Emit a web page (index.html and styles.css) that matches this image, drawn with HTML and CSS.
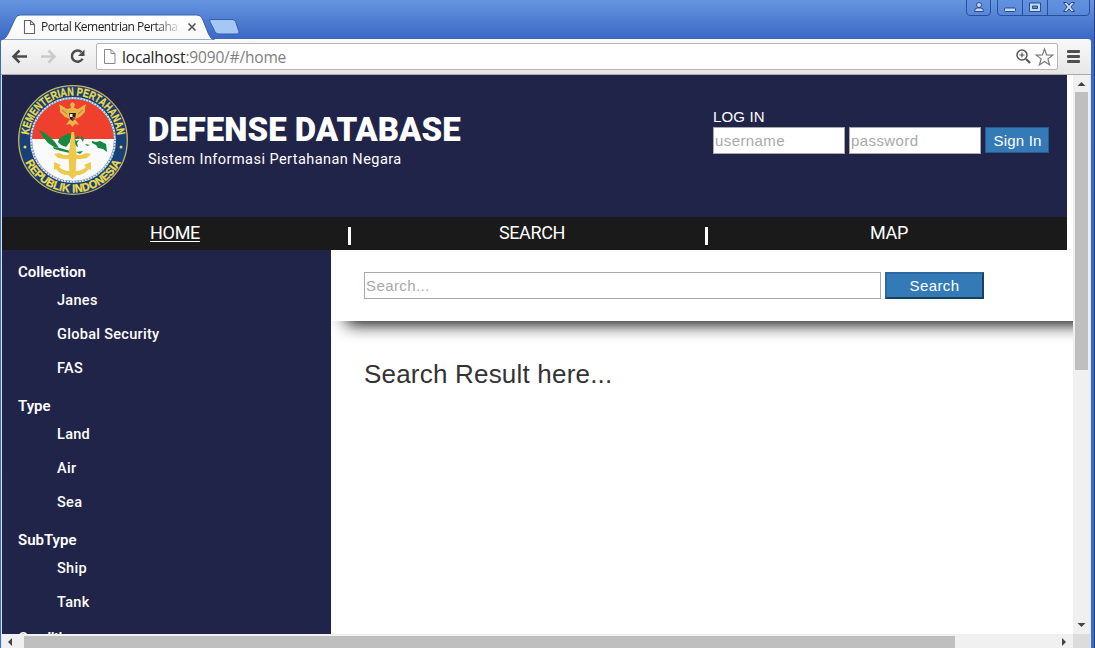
FILE: index.html
```html
<!DOCTYPE html>
<html lang="id">
<head>
<meta charset="utf-8">
<title>Portal Kementrian Pertahanan</title>
<link rel="stylesheet" href="styles.css">
</head>
<body>
<div class="window">
  <div class="titlebar">
    <svg class="tabs" width="260" height="40" viewBox="0 0 260 40">
      <defs><linearGradient id="tab" x1="0" y1="0" x2="0" y2="1"><stop offset="0" stop-color="#fff"/><stop offset="1" stop-color="#f8f8f8"/></linearGradient></defs>
      <path d="M211 19.500h21q2.500 0 3.500 2l3.400 10q.8 2.500-2 2.500h-18q-3 0-4-2.500l-5-10q-.8-2 1.100-2z" fill="#a5c7f4" stroke="#3560b0"/>
      <path d="M1 40q5-1 7-6l7-15q1.500-4 5-4h177q4 0 5.500 4l6 15q2 5 6 6z" fill="url(#tab)" stroke="#3a62ae"/>
      <path d="M24.500 20.500h6l4 4v9h-10zM30.500 20.500v4h4" fill="#fff" stroke="#666" stroke-width="1.100"/>
      <path d="M188.500 23.500l7 7m0-7l-7 7" stroke="#555" stroke-width="1.700"/>
    </svg>
    <span class="tab-title">Portal Kementrian Pertaha</span>
    <svg class="controls" width="125" height="17" viewBox="0 0 125 17">
      <g fill="#5f8fe0" fill-opacity=".35" stroke="#274f9d"><path d="M1.500-2v14q0 3.500 3.500 3.500h17q3.500 0 3.500-3.500V-2z"/><path d="M32.500-2v14q0 3.500 3.500 3.500h85q3.500 0 3.500-3.500V-2zM57.500-1v16M82.500-1v16"/></g>
      <g fill="#c3daf8" stroke="#233e78" stroke-width=".9"><circle cx="14" cy="5" r="2.500"/><path d="M9.500 11.500q0-3.500 3-3.500h3q3 0 3 3.500z"/><rect x="39.500" y="8" width="11" height="3.500" rx="1"/><path fill-rule="evenodd" d="M64.500 3h11v8.500h-11zM67.500 6v2.500h5V6z"/><path d="M98.500 2.500h3.300l2.200 2.700 2.200-2.700h3.300l-3.600 4.500 3.600 4.500h-3.300L104 8.800l-2.200 2.700h-3.300l3.600-4.500z"/></g>
    </svg>
  </div>
  <div class="toolbar">
    <svg class="nav-icons" width="92" height="35" viewBox="0 0 92 35" fill="none" stroke-width="2.500">
      <path d="M27 17.500H13.500M19.500 11.500l-6 6 6 6" stroke="#4c4c4c"/>
      <path d="M41 17.500h13.500M48.500 11.500l6 6-6 6" stroke="#cacaca"/>
      <path d="M81.500 13.200a5.600 5.600 0 1 0 1 6.500" stroke="#4c4c4c"/><path d="M84.500 10.500v6.500H78z" fill="#4c4c4c"/>
    </svg>
    <div class="address">
      <svg width="14" height="17" viewBox="0 0 14 17"><path d="M1.500 1.500h6.500l4 4v10H1.500zM8 1.500v4h4" fill="#fff" stroke="#888"/></svg>
      <span class="url"><b>localhost</b>:9090/#/home</span>
      <svg class="page-actions" width="40" height="20" viewBox="0 0 40 20" fill="none" stroke="#555">
        <circle cx="7" cy="8" r="5" stroke-width="1.500"/><path d="M4.500 8h5M7 5.500v5" stroke-width="1.200"/><path d="M11 12l4 4" stroke-width="2.200"/>
        <path d="M29.500 2l2.100 5.900 6.200.2-4.900 3.800 1.700 6-5.100-3.500-5.100 3.500 1.700-6-4.900-3.800 6.200-.2z" stroke="#777" stroke-width="1.200" fill="#fff"/>
      </svg>
    </div>
    <div class="menu"><i></i><i></i><i></i></div>
  </div>
  <div class="viewport">
    <main class="page">
      <header class="header">
        <svg class="emblem" width="110" height="110" viewBox="0 0 110 110">
          <defs>
            <path id="arc-top" d="M10.500 55a44.500 44.500 0 0 1 89 0"/>
            <path id="arc-bottom" d="M2.500 55a52.500 52.500 0 0 0 105 0"/>
            <clipPath id="disc"><circle cx="55" cy="55" r="41"/></clipPath>
          </defs>
          <circle cx="55" cy="55" r="54.300" fill="#174078" stroke="#c8b65c" stroke-width="1.300"/>
          <g clip-path="url(#disc)"><path fill="#f8fafc" d="M10 54h90v46H10z"/><path fill="#ee402c" d="M10 10h90v44H10z"/></g>
          <circle cx="55" cy="55" r="42" fill="none" stroke="#d8e1ec" stroke-width="2"/>
          <circle cx="55" cy="55" r="42" fill="none" stroke="#5279aa" stroke-width="1.600" stroke-dasharray="1 2"/>
          <g class="emblem-text"><text textLength="130" lengthAdjust="spacingAndGlyphs"><textPath href="#arc-top" startOffset="5">KEMENTERIAN PERTAHANAN</textPath></text>
          <text textLength="119" lengthAdjust="spacingAndGlyphs"><textPath href="#arc-bottom" startOffset="23">REPUBLIK INDONESIA</textPath></text></g>
          <circle cx="7" cy="62" r="1.500" fill="#efdb4a"/><circle cx="103" cy="62" r="1.500" fill="#efdb4a"/>
          <g fill="#178842"><path d="M21 45l4 2 6 4 6 6 4 6-5-1-6-4-5-6z"/><path d="M35 62l7 1 10 3v2l-9-2-7-2z"/><path d="M41 54l4-3 6-3 2 3-1 6-4 5-5-2-3-3z"/><path d="M56 53l5-2v2l-4 1 1 2 3-1-2 3 1 4-2-1-2-4-1 3-1-3zM63 51l3 2-1 4-2-3zM67 59l5 1-3 1zM74 56l4 1 4-1 6 3 1 8-4-3-5-1-2-3-4-2zM58 67l7-1-3 3z"/></g>
          <g fill="#f0c84a">
            <path d="M53.500 47h2.500l1 9 1.500 13-1 22-3 3-3-3-1-22 2-13z"/>
            <path d="M36 69l5-1 5 2h17l5-2 5 1-4 4-6 1H47l-7-1z"/>
            <path d="M36 77l7 3-2 2q4 4 10 4h7q6 0 10-4l-2-2 7-3v8l-2-1q-5 6-12 6l-4.500 3L50 90q-7 0-12-6l-2 1z"/>
          </g>
          <path d="M54.500 17l2.500 2-1 4 4 1 8-5-1 4v4l-5 5-5 2 4 6-4-1-2.500 3-2.500-3-4 1 4-6-5-2-5-5v-4l-1-4 8 5 4-1-1-4z" fill="#e8b34b"/>
          <path d="M51 28h7l-1 6-2.500 2-2.500-2z" fill="#272724"/><path d="M52 29h2.500v3H52z" fill="#eee"/><path d="M54.500 32H57v2l-2.500 1z" fill="#df392d"/><path d="M44 25l5 4m16-4l-5 4" fill="none" stroke="#a7682b" stroke-width=".8"/>
        </svg>
        <div class="brand"><h1>DEFENSE DATABASE</h1><p>Sistem Informasi Pertahanan Negara</p></div>
        <form class="login">
          <label>LOG IN</label>
          <div class="login-row"><input class="field" placeholder="username"><input class="field" placeholder="password"><button class="signin" type="button">Sign In</button></div>
        </form>
      </header>
      <nav class="nav"><a class="active">HOME</a><i></i><a>SEARCH</a><i></i><a>MAP</a></nav>
      <div class="columns">
        <aside class="sidebar">
          <h2>Collection</h2><ul><li>Janes</li><li>Global Security</li><li>FAS</li></ul>
          <h2>Type</h2><ul><li>Land</li><li>Air</li><li>Sea</li></ul>
          <h2>SubType</h2><ul><li>Ship</li><li>Tank</li></ul>
          <h2 class="partial">Condition</h2>
        </aside>
        <section class="content">
          <div class="searchbar"><input class="field wide" placeholder="Search..."><button class="search" type="button">Search</button></div>
          <h3>Search Result here...</h3>
        </section>
      </div>
    </main>
    <div class="vscroll"><svg width="17" height="17"><path d="M4.500 11h8l-4-4z"/></svg><i></i><svg width="17" height="17"><path d="M4.500 6h8l-4 4z"/></svg></div>
    <div class="hscroll"><svg width="22" height="14"><path d="M10 4v8L6 8z"/></svg><i></i><svg width="17" height="14"><path d="M6 4v8l4-4z"/></svg></div>
    <div class="corner"></div>
  </div>
</div>
</body>
</html>
```
FILE: styles.css
```css
* { box-sizing: border-box; }
body { margin: 0; font-family: "Liberation Sans", Arial, sans-serif; }
h1, h2, h3, p, ul { margin: 0; padding: 0; list-style: none; }
svg { display: block; flex: none; }
.window { width: 1095px; height: 648px; overflow: hidden; background: linear-gradient(#6595df, #3b68c4 39px, #3c6cc4); border-right: 1px solid #25437f; display: flex; flex-direction: column; }
.titlebar { height: 39px; flex: none; display: flex; justify-content: space-between; position: relative; }
.tab-title { position: absolute; left: 41px; top: 18px; width: 141px; height: 18px; overflow: hidden; white-space: nowrap; font: 12px/18px "Open Sans", sans-serif; letter-spacing: -0.5px; color: #222; -webkit-mask-image: linear-gradient(90deg, #000 80%, transparent); mask-image: linear-gradient(90deg, #000 80%, transparent); }
.controls { margin-right: 4px; }
.toolbar { height: 36px; flex: none; width: 1090px; margin-left: 1px; display: flex; align-items: center; background: linear-gradient(#f9f9f9, #e7e7e7); border-bottom: 1px solid #aaa; border-radius: 3px 3px 0 0; }
.nav-icons { margin-left: -1px; }
.address { margin-left: 4px; width: 962px; height: 27px; display: flex; align-items: center; background: #fff; border: 1px solid #b5b5b5; border-radius: 2px; padding: 0 2px 0 6px; }
.url { flex: 1; margin-left: 5px; font: 15.500px/24px "Open Sans", sans-serif; letter-spacing: -.17px; color: #808080; }
.url b { font-weight: 400; color: #222; }
.menu { display: grid; gap: 2px; margin-left: 9px; }
.menu i { width: 13px; height: 3px; background: #505050; border-radius: 1px; }
.viewport { width: 1090px; height: 573px; margin-left: 1px; border-left: 1px solid #dde6f5; border-right: 1px solid #dde6f5; display: grid; grid-template: 559px 14px / 1071px 17px; background: #fff; }
.page { overflow: hidden; background: #fff; }
.header { width: 1065px; height: 142px; background: #212449; display: flex; padding: 10px 16px 0; color: #fff; }
.brand { margin: 24px 0 0 20px; width: 565px; white-space: nowrap; }
.brand h1 { font: 900 33px/42px Roboto, sans-serif; letter-spacing: 0; }
.brand p { font: 400 14.500px/17px Roboto, sans-serif; letter-spacing: .45px; }
.emblem-text { font: 700 11.500px "Liberation Sans", sans-serif; fill: #f0dc48; stroke: #f0dc48; stroke-width: .3px; }
.login { padding-top: 23px; font-size: 15px; }
.login label { display: block; height: 19px; line-height: 18px; letter-spacing: .15px; }
.login-row { display: flex; gap: 4px; }
.field { width: 132px; height: 27px; border: 1px solid #a9a9a9; background: #fff; padding: 1px; font: 15px "Liberation Sans", Arial, sans-serif; letter-spacing: .4px; }
.field::placeholder { color: #a9a9a9; }
.signin { width: 64px; height: 26px; padding: 0 0 0 1px; background: #337ab7; color: #fff; border: 1px solid #245a8c; font: 15px "Liberation Sans", Arial, sans-serif; letter-spacing: .2px; }
.nav { width: 1065px; height: 33px; background: #1a1a1a; color: #fff; display: grid; grid-template-columns: 346px 4px 353px 4px 358px; align-items: center; text-align: center; font: 400 18px/31px Roboto, sans-serif; letter-spacing: -.35px; }
.nav a { padding-bottom: 2px; }
.nav a:nth-of-type(2) { padding-left: 7px; }
.nav a:nth-of-type(3) { padding-left: 2px; }
.nav a.active { text-decoration: underline; text-underline-offset: 2px; text-decoration-thickness: 1px; }
.nav i { width: 3px; height: 18px; background: #fff; margin-top: 5px; }
.columns { display: flex; height: 384px; }
.sidebar { width: 329px; flex: none; background: #212449; padding: 1px 16px 0; color: #fff; overflow: hidden; font-family: Roboto, sans-serif; }
.sidebar h2 { margin-top: 10px; font-size: 15px; font-weight: 600; line-height: 22px; }
.sidebar h2.partial { margin-top: 8px; letter-spacing: -.6px; }
.sidebar ul { position: relative; top: 1px; }
.sidebar li { padding-left: 39px; font-size: 14.500px; font-weight: 500; line-height: 34px; letter-spacing: .3px; }
.content { flex: 1; overflow: hidden; }
.searchbar { width: 790px; height: 71px; background: #fff; padding: 22px 33px; display: flex; gap: 4px; box-shadow: 0 18px 17px -15px #000; }
.field.wide { width: 517px; flex: none; }
.search { width: 99px; height: 27px; padding: 0; background: #337ab7; color: #fff; border: 2px solid; border-color: #2b6a9f #1b3f5f #1b3f5f #2b6a9f; font: 15px "Liberation Sans", Arial, sans-serif; letter-spacing: .4px; }
h3 { margin: 37px 0 0 33px; font-weight: 400; font-size: 26px; line-height: 32px; letter-spacing: .2px; color: #333; }
.vscroll { background: #f0f0f0; display: flex; flex-direction: column; }
.vscroll i { width: 13px; height: 278px; margin: 0 2px auto; background: #bfbfbf; }
.hscroll { background: #f0f0f0; display: flex; }
.hscroll i { width: 931px; height: 12px; margin: 2px auto 0 0; background: #bfbfbf; }
.vscroll path, .hscroll path { fill: #444; }
.corner { background: #dcdcdc; }
```
